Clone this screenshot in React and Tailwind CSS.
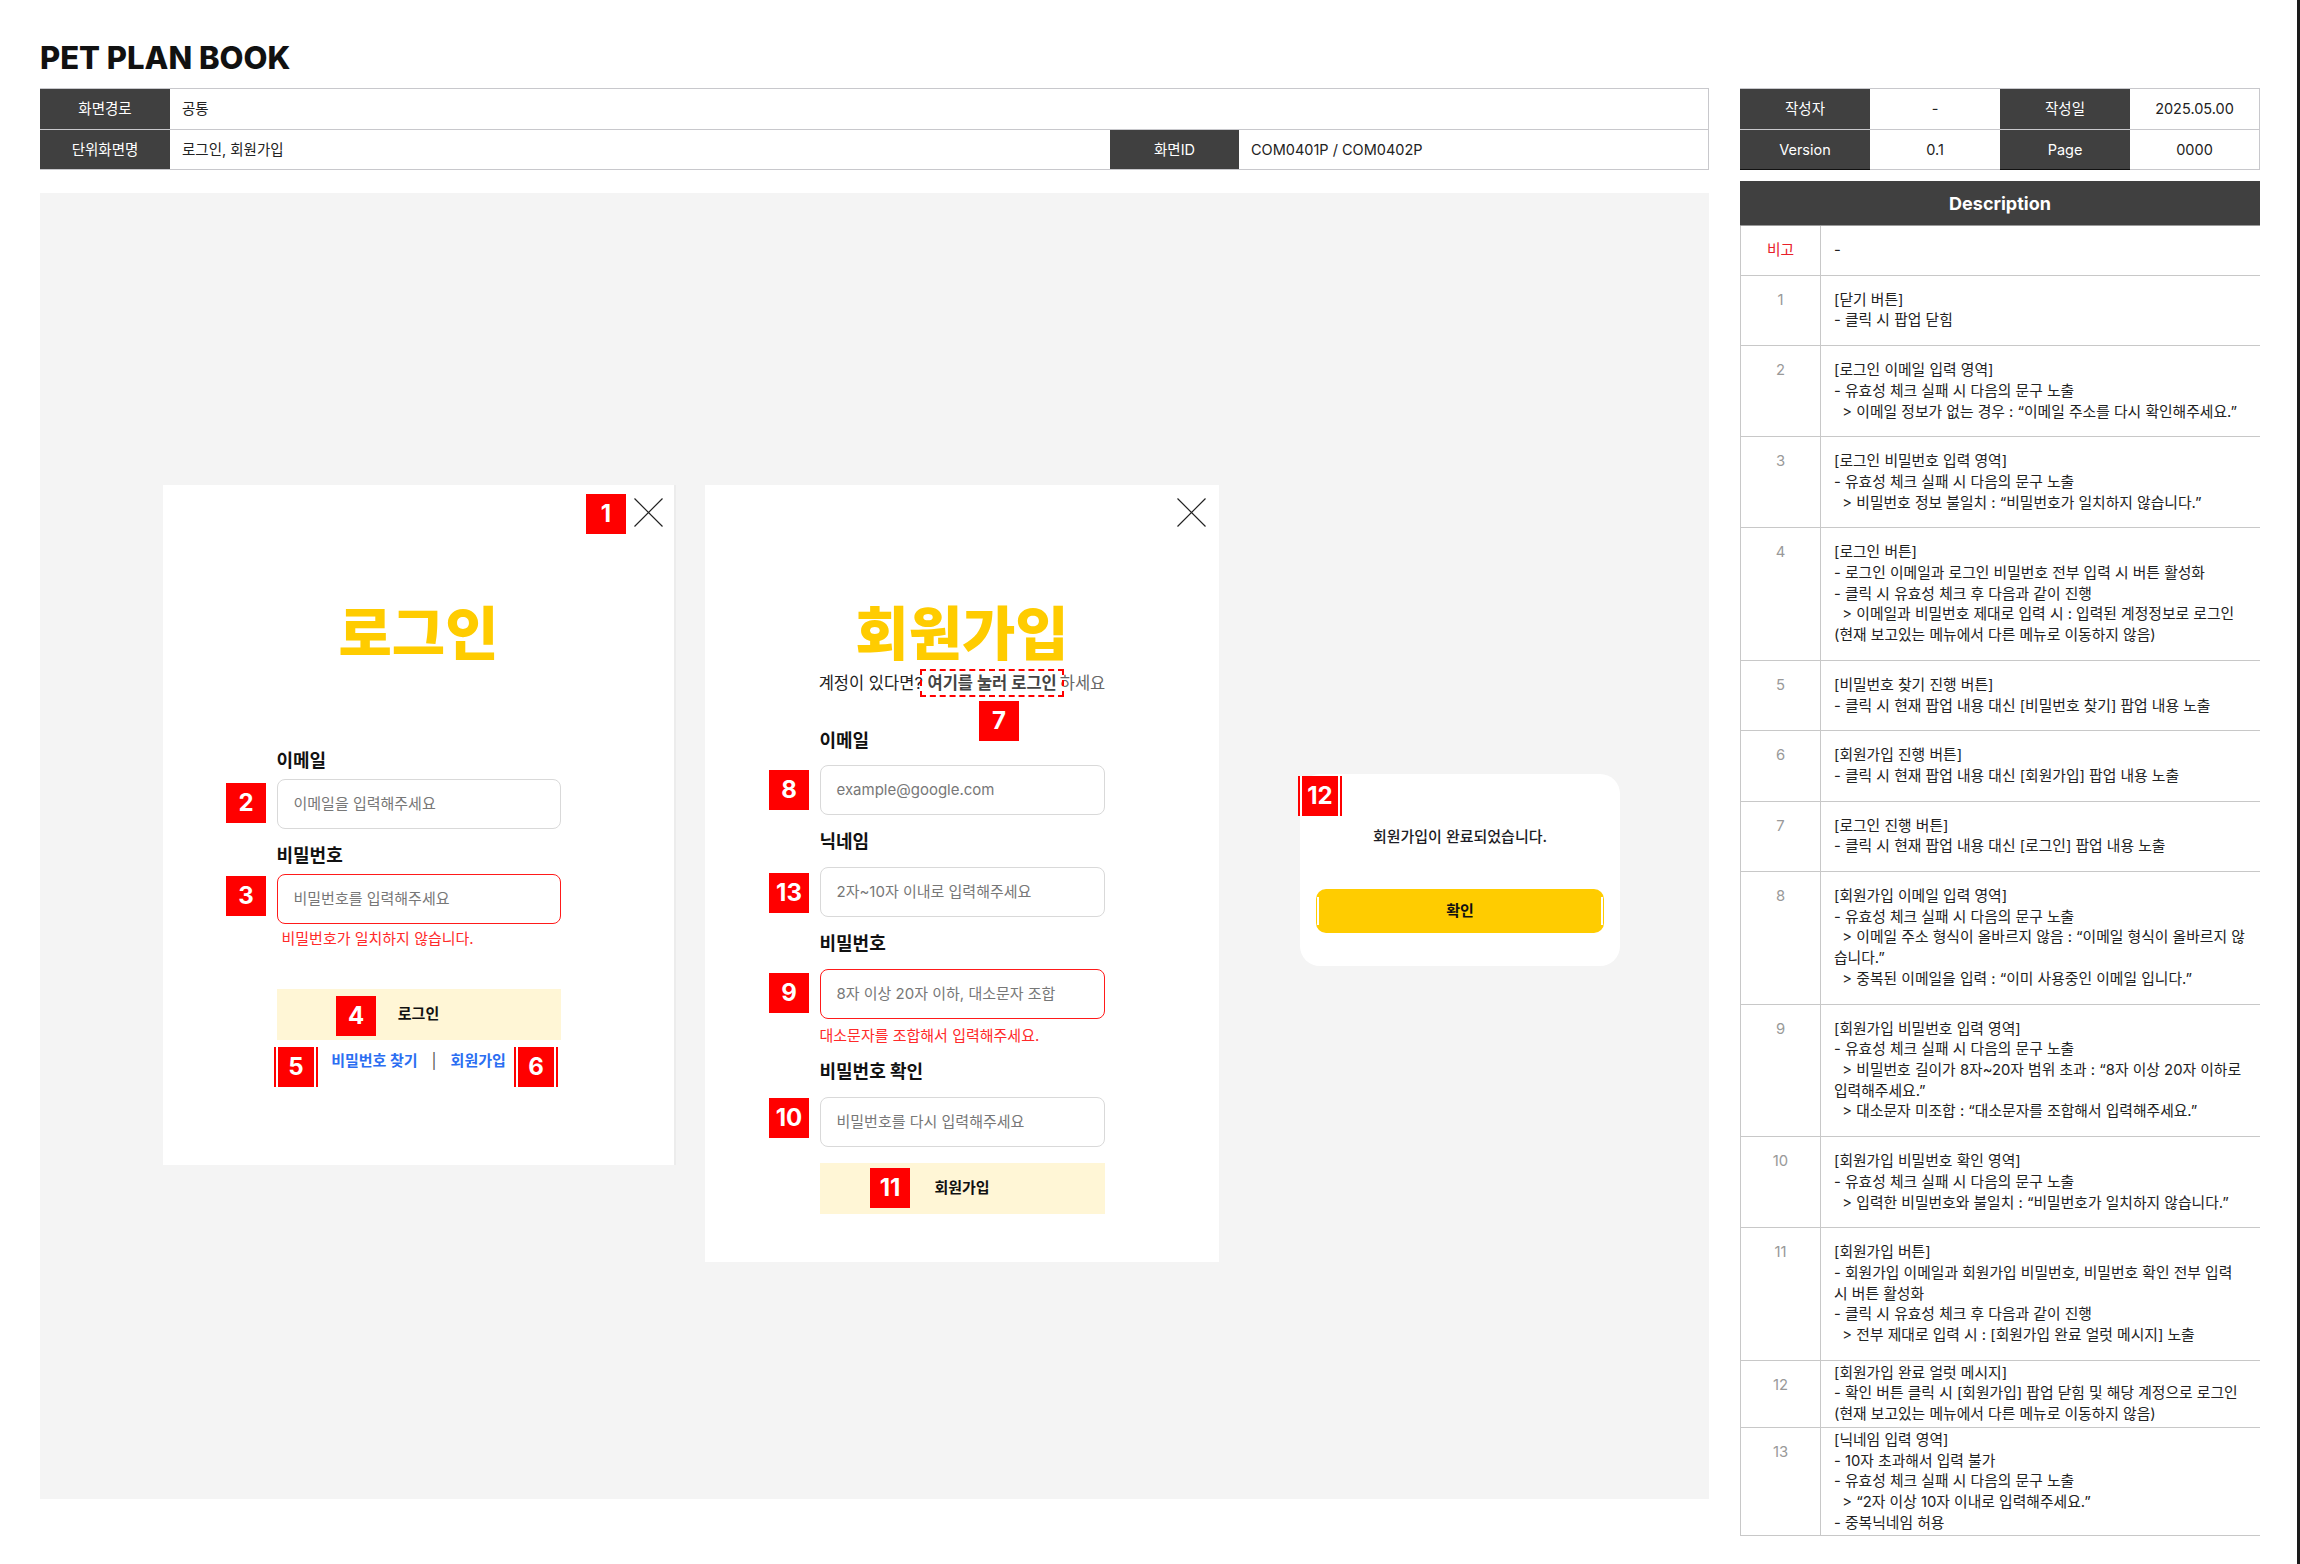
import React from 'react'

const descRows = [
  { n: '1', lines: ['[닫기 버튼]', '- 클릭 시 팝업 닫힘'] },
  { n: '2', lines: ['[로그인 이메일 입력 영역]', '- 유효성 체크 실패 시 다음의 문구 노출', '  > 이메일 정보가 없는 경우 : “이메일 주소를 다시 확인해주세요.”'] },
  { n: '3', lines: ['[로그인 비밀번호 입력 영역]', '- 유효성 체크 실패 시 다음의 문구 노출', '  > 비밀번호 정보 불일치 : “비밀번호가 일치하지 않습니다.”'] },
  {
    n: '4',
    lines: [
      '[로그인 버튼]',
      '- 로그인 이메일과 로그인 비밀번호 전부 입력 시 버튼 활성화',
      '- 클릭 시 유효성 체크 후 다음과 같이 진행',
      '  > 이메일과 비밀번호 제대로 입력 시 : 입력된 계정정보로 로그인',
      '(현재 보고있는 메뉴에서 다른 메뉴로 이동하지 않음)',
    ],
  },
  { n: '5', lines: ['[비밀번호 찾기 진행 버튼]', '- 클릭 시 현재 팝업 내용 대신 [비밀번호 찾기] 팝업 내용 노출'] },
  { n: '6', lines: ['[회원가입 진행 버튼]', '- 클릭 시 현재 팝업 내용 대신 [회원가입] 팝업 내용 노출'] },
  { n: '7', lines: ['[로그인 진행 버튼]', '- 클릭 시 현재 팝업 내용 대신 [로그인] 팝업 내용 노출'] },
  {
    n: '8',
    lines: [
      '[회원가입 이메일 입력 영역]',
      '- 유효성 체크 실패 시 다음의 문구 노출',
      '  > 이메일 주소 형식이 올바르지 않음 : “이메일 형식이 올바르지 않',
      '습니다.”',
      '  > 중복된 이메일을 입력 : “이미 사용중인 이메일 입니다.”',
    ],
  },
  {
    n: '9',
    lines: [
      '[회원가입 비밀번호 입력 영역]',
      '- 유효성 체크 실패 시 다음의 문구 노출',
      '  > 비밀번호 길이가 8자~20자 범위 초과 : “8자 이상 20자 이하로',
      '입력해주세요.”',
      '  > 대소문자 미조합 : “대소문자를 조합해서 입력해주세요.”',
    ],
  },
  { n: '10', lines: ['[회원가입 비밀번호 확인 영역]', '- 유효성 체크 실패 시 다음의 문구 노출', '  > 입력한 비밀번호와 불일치 : “비밀번호가 일치하지 않습니다.”'] },
  {
    n: '11',
    lines: [
      '[회원가입 버튼]',
      '- 회원가입 이메일과 회원가입 비밀번호, 비밀번호 확인 전부 입력',
      '시 버튼 활성화',
      '- 클릭 시 유효성 체크 후 다음과 같이 진행',
      '  > 전부 제대로 입력 시 : [회원가입 완료 얼럿 메시지] 노출',
    ],
  },
  {
    n: '12',
    tight: true,
    lines: ['[회원가입 완료 얼럿 메시지]', '- 확인 버튼 클릭 시 [회원가입] 팝업 닫힘 및 해당 계정으로 로그인', '(현재 보고있는 메뉴에서 다른 메뉴로 이동하지 않음)'],
  },
  {
    n: '13',
    tight: true,
    lines: ['[닉네임 입력 영역]', '- 10자 초과해서 입력 불가', '- 유효성 체크 실패 시 다음의 문구 노출', '  > “2자 이상 10자 이내로 입력해주세요.”', '- 중복닉네임 허용'],
  },
]

function Badge({ n, className = '', stripe }) {
  return (
    <div
      className={`absolute flex h-10 items-center justify-center bg-[#ff0000] text-[24px] font-bold leading-none text-white ${
        stripe ? 'w-[44px]' : 'w-10'
      } ${className}`}
    >
      {stripe && (
        <>
          <span className="absolute left-[2px] top-0 h-full w-[2px] bg-white" />
          <span className="absolute right-[2px] top-0 h-full w-[2px] bg-white" />
        </>
      )}
      {n}
    </div>
  )
}

function CloseIcon({ className = '' }) {
  return (
    <svg className={className} width="29" height="29" viewBox="0 0 29 29" fill="none">
      <path d="M0.5 0.5L28.5 28.5M28.5 0.5L0.5 28.5" stroke="#222" strokeWidth="1.2" />
    </svg>
  )
}

function Field({ placeholder, error, className = '' }) {
  return (
    <div
      className={`flex h-[50px] items-center rounded-lg border px-4 text-[15px] text-[#777] ${
        error ? 'border-[#ff1a1a]' : 'border-[#d9d9d9]'
      } ${className}`}
    >
      {placeholder}
    </div>
  )
}

function Label({ children, className = '' }) {
  return <div className={`text-[18px] font-bold leading-5 text-[#111] ${className}`}>{children}</div>
}

function LoginCard() {
  return (
    <div className="relative flex h-[680px] w-[513px] shrink-0 flex-col items-center border-r-2 border-[#ececec] bg-white">
      <CloseIcon className="absolute left-[471px] top-[13px]" />
      <Badge n="1" className="left-[423px] top-[9px]" />
      <Badge n="2" className="left-[63px] top-[298px]" />
      <Badge n="3" className="left-[63px] top-[391px]" />
      <Badge n="4" className="left-[173px] top-[511px]" />
      <Badge n="5" stripe className="left-[111px] top-[562px]" />
      <Badge n="6" stripe className="left-[351px] top-[562px]" />

      <div className="mt-[120px] h-[58px] text-[58px] font-black leading-[58px] text-[#ffcc00]">로그인</div>

      <div className="mt-[88px] flex w-[284px] flex-col">
        <Label>이메일</Label>
        <Field className="mt-2" placeholder="이메일을 입력해주세요" />
        <Label className="mt-[17px]">비밀번호</Label>
        <Field className="mt-2" error placeholder="비밀번호를 입력해주세요" />
        <p className="mt-[5px] pl-[5px] text-[15px] leading-5 text-[#ff2a2a]">비밀번호가 일치하지 않습니다.</p>
        <button className="mt-[40px] h-[51px] bg-[#fff6d6] text-[15px] font-bold text-[#111]">로그인</button>
        <div className="mt-[11px] flex items-center justify-center gap-[14px] text-[15px] font-bold leading-5 text-[#2b6ef2]">
          <span>비밀번호 찾기</span>
          <span className="font-normal text-[#555]">|</span>
          <span>회원가입</span>
        </div>
      </div>
    </div>
  )
}

function SignupCard() {
  return (
    <div className="relative ml-[29px] flex h-[777px] w-[514px] shrink-0 flex-col items-center bg-white">
      <CloseIcon className="absolute left-[472px] top-[13px]" />
      <Badge n="7" className="left-[274px] top-[216px]" />
      <Badge n="8" className="left-[64px] top-[285px]" />
      <Badge n="13" className="left-[64px] top-[388px]" />
      <Badge n="9" className="left-[64px] top-[488px]" />
      <Badge n="10" className="left-[64px] top-[613px]" />
      <Badge n="11" className="left-[165px] top-[683px]" />

      <div className="mt-[120px] h-[58px] text-[58px] font-black leading-[58px] text-[#ffcc00]">회원가입</div>
      <p className="mt-[9px] whitespace-nowrap text-[16.5px] leading-[22px] text-[#222]">
        계정이 있다면?{' '}
        <span className="relative font-bold text-[#444]">
          여기를 눌러 로그인
          <span className="absolute -bottom-[4px] -left-[7px] -right-[7px] -top-[4px] border-2 border-dashed border-[#ff0000]" />
        </span>
        <span className="pl-[3px] text-[#666]">하세요</span>
      </p>

      <div className="mt-[37px] flex w-[285px] flex-col">
        <Label>이메일</Label>
        <Field className="mt-[14px]" placeholder="example@google.com" />
        <Label className="mt-[17px]">닉네임</Label>
        <Field className="mt-[15px]" placeholder="2자~10자 이내로 입력해주세요" />
        <Label className="mt-[17px]">비밀번호</Label>
        <Field className="mt-[15px]" error placeholder="8자 이상 20자 이하, 대소문자 조합" />
        <p className="mt-[7px] text-[15px] leading-5 text-[#ff2a2a]">대소문자를 조합해서 입력해주세요.</p>
        <Label className="mt-[16px]">비밀번호 확인</Label>
        <Field className="mt-[15px]" placeholder="비밀번호를 다시 입력해주세요" />
        <button className="mt-[16px] h-[51px] bg-[#fff6d6] text-[15px] font-bold text-[#111]">회원가입</button>
      </div>
    </div>
  )
}

function AlertCard() {
  return (
    <div className="relative ml-[81px] mt-[289px] flex h-[192px] w-[320px] shrink-0 flex-col items-center rounded-[20px] bg-white">
      <Badge n="12" stripe className="-left-[2px] top-[2px]" />
      <p className="mt-[53px] text-[15px] font-medium leading-5 text-[#1c1c24]">회원가입이 완료되었습니다.</p>
      <button className="relative mt-[42px] h-[44px] w-[288px] rounded-[10px] bg-[#ffcc00] text-[15px] font-bold text-[#111]">
        <span className="absolute left-[1px] top-[8px] h-[28px] w-[2px] bg-white" />
        <span className="absolute right-[1px] top-[8px] h-[28px] w-[2px] bg-white" />
        확인
      </button>
    </div>
  )
}

export default function App() {
  return (
    <div className="relative flex h-[1564px] w-[2300px] flex-col overflow-hidden bg-white pl-[40px] pt-[40px] font-[family-name:Inter,'Noto_Sans_CJK_KR',sans-serif] text-[#222]">
      <div className="absolute right-0 top-0 h-full w-[3px] bg-[#1a1a1a]" />
      <h1 className="mb-[12px] h-9 text-[31px] font-extrabold leading-9 text-[#111]">PET PLAN BOOK</h1>

      <div className="flex items-start gap-[31px]">
        {/* left column */}
        <div className="flex w-[1669px] flex-col">
          <div className="flex flex-col border-y border-r border-[#c8c8cc] text-[14.5px]">
            <div className="flex h-[40px]">
              <div className="flex w-[130px] items-center justify-center bg-[#404040] text-white">화면경로</div>
              <div className="flex flex-1 items-center pl-[12px]">공통</div>
            </div>
            <div className="flex h-[40px] border-t border-[#c8c8cc]">
              <div className="flex w-[130px] items-center justify-center bg-[#404040] text-white">단위화면명</div>
              <div className="flex w-[940px] items-center pl-[12px]">로그인, 회원가입</div>
              <div className="flex w-[129px] items-center justify-center bg-[#404040] text-white">화면ID</div>
              <div className="flex flex-1 items-center pl-[12px]">COM0401P / COM0402P</div>
            </div>
          </div>

          <div className="mt-[23px] flex h-[1306px] items-start bg-[#f4f4f4] pl-[123px] pt-[292px]">
            <LoginCard />
            <SignupCard />
            <AlertCard />
          </div>
        </div>

        {/* right column */}
        <div className="flex w-[520px] flex-col">
          <div className="flex flex-col border-y border-r border-[#c8c8cc] text-[14.5px]">
            <div className="flex h-[40px]">
              <div className="flex w-[130px] items-center justify-center bg-[#404040] text-white">작성자</div>
              <div className="flex w-[130px] items-center justify-center">-</div>
              <div className="flex w-[130px] items-center justify-center bg-[#404040] text-white">작성일</div>
              <div className="flex flex-1 items-center justify-center">2025.05.00</div>
            </div>
            <div className="flex h-[40px] border-t border-[#c8c8cc]">
              <div className="flex w-[130px] items-center justify-center bg-[#404040] text-white shadow-[0_1px_0_#111]">Version</div>
              <div className="flex w-[130px] items-center justify-center">0.1</div>
              <div className="flex w-[130px] items-center justify-center bg-[#404040] text-white shadow-[0_1px_0_#111]">Page</div>
              <div className="flex flex-1 items-center justify-center">0000</div>
            </div>
          </div>

          <div className="mt-[11px] flex h-[45px] items-center justify-center border-b border-[#9a9a9a] bg-[#404040] text-[18px] font-bold text-white">
            Description
          </div>

          <div className="flex flex-col border-l border-[#c8c8c8] text-[14.8px]">
            <div className="flex border-b border-[#c8c8c8]">
              <div className="w-[80px] shrink-0 border-r border-[#c8c8c8] py-[14px] text-center leading-[20.7px] text-[#e8202a]">비고</div>
              <div className="py-[14px] pl-[13px] leading-[20.7px]">-</div>
            </div>
            {descRows.map(r => (
              <div key={r.n} className="flex border-b border-[#c8c8c8]">
                <div className="w-[80px] shrink-0 border-r border-[#c8c8c8] pt-[14px] text-center leading-[20.7px] text-[#999]">{r.n}</div>
                <div className={`flex-1 whitespace-pre pl-[13px] leading-[20.7px] text-[#222] ${r.tight ? 'py-[2px]' : 'py-[14px]'}`}>
                  {r.lines.map((l, i) => (
                    <div key={i}>{l}</div>
                  ))}
                </div>
              </div>
            ))}
          </div>
        </div>
      </div>
    </div>
  )
}
